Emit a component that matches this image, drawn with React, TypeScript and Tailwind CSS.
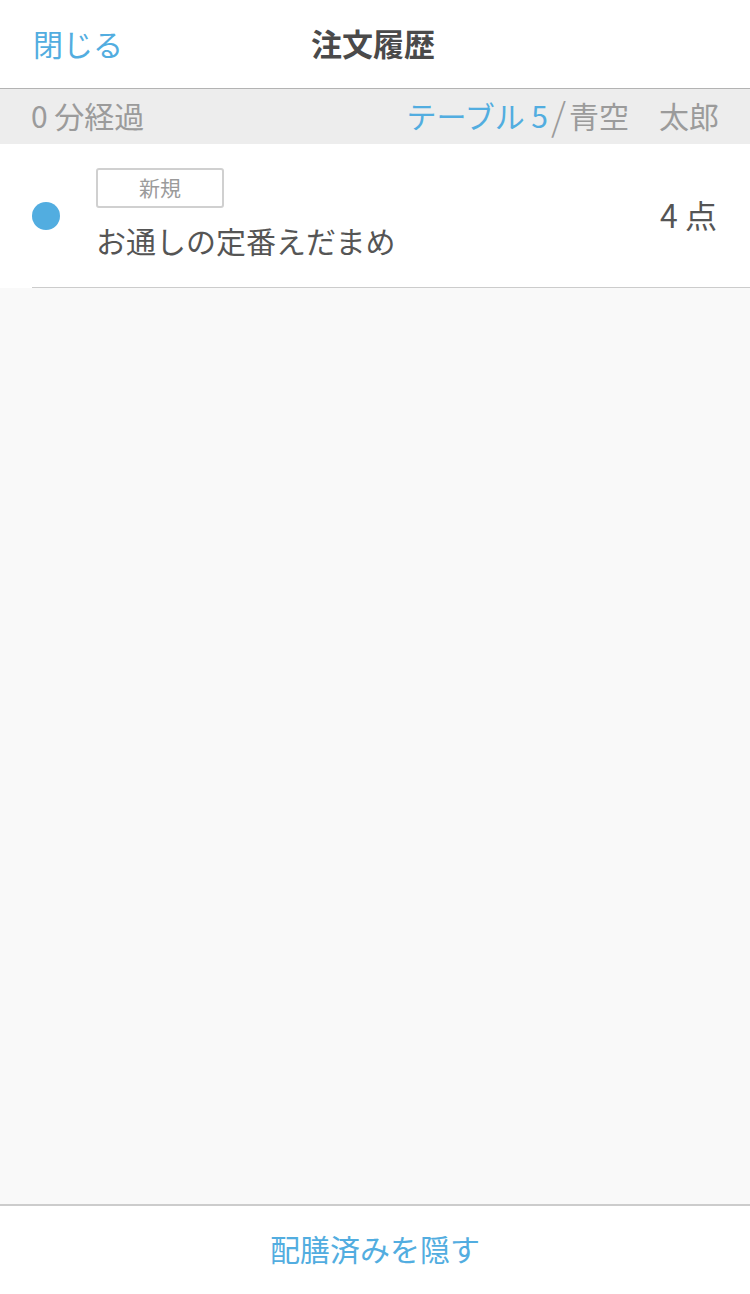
import React from 'react';

const font = { fontFamily: '"Noto Sans CJK JP", "Noto Sans", sans-serif' };

const App: React.FC = () => {
    return (
        <div className="h-screen w-full flex flex-col bg-[#f9f9f9]" style={font}>
            <header className="h-[89px] shrink-0 bg-white border-b border-[#b3b3b3] flex items-center relative pb-[3px]">
                <button className="ml-[33px] text-[30px] leading-none text-[#52ade0]">閉じる</button>
                <h1 className="absolute left-[311px] text-[31px] leading-none font-bold text-[#4a4a4a]">注文履歴</h1>
            </header>

            <div className="h-[55px] shrink-0 bg-[#ededed] flex items-center justify-between px-[31px] pb-[3px] text-[30px] leading-none text-[#9b9b9b]">
                <div>0 分経過</div>
                <div className="flex items-center">
                    <span className="text-[#52ade0]">テーブル 5</span>
                    <span className="text-[38px] mx-[3px] font-light">/</span>
                    <span>青空　太郎</span>
                </div>
            </div>

            <div className="h-[144px] shrink-0 bg-white flex">
                <div className="w-[96px] shrink-0 flex items-center pl-[32px]">
                    <div className="w-[28px] h-[28px] rounded-full bg-[#52ade0]" />
                </div>
                <div className="flex-1 flex items-center border-b border-[#cccccc] pr-[33px] ml-[-64px] pl-[64px]">
                    <div className="flex-1 flex flex-col self-start pt-[24px]">
                        <div className="w-[128px] h-[40px] border-2 border-[#d0d0d0] rounded-[3px] flex items-center justify-center text-[21px] text-[#9b9b9b]">
                            新規
                        </div>
                        <div className="mt-[17px] text-[30px] leading-none text-[#555555]">お通しの定番えだまめ</div>
                    </div>
                    <div className="text-[32px] leading-none text-[#555555] pb-[4px]">4 点</div>
                </div>
            </div>

            <main className="flex-1" />

            <footer className="h-[90px] shrink-0 bg-white border-t-2 border-[#cccccc] flex items-center justify-center pb-[4px]">
                <button className="text-[30px] leading-none text-[#52ade0]">配膳済みを隠す</button>
            </footer>
        </div>
    );
};

export default App;
